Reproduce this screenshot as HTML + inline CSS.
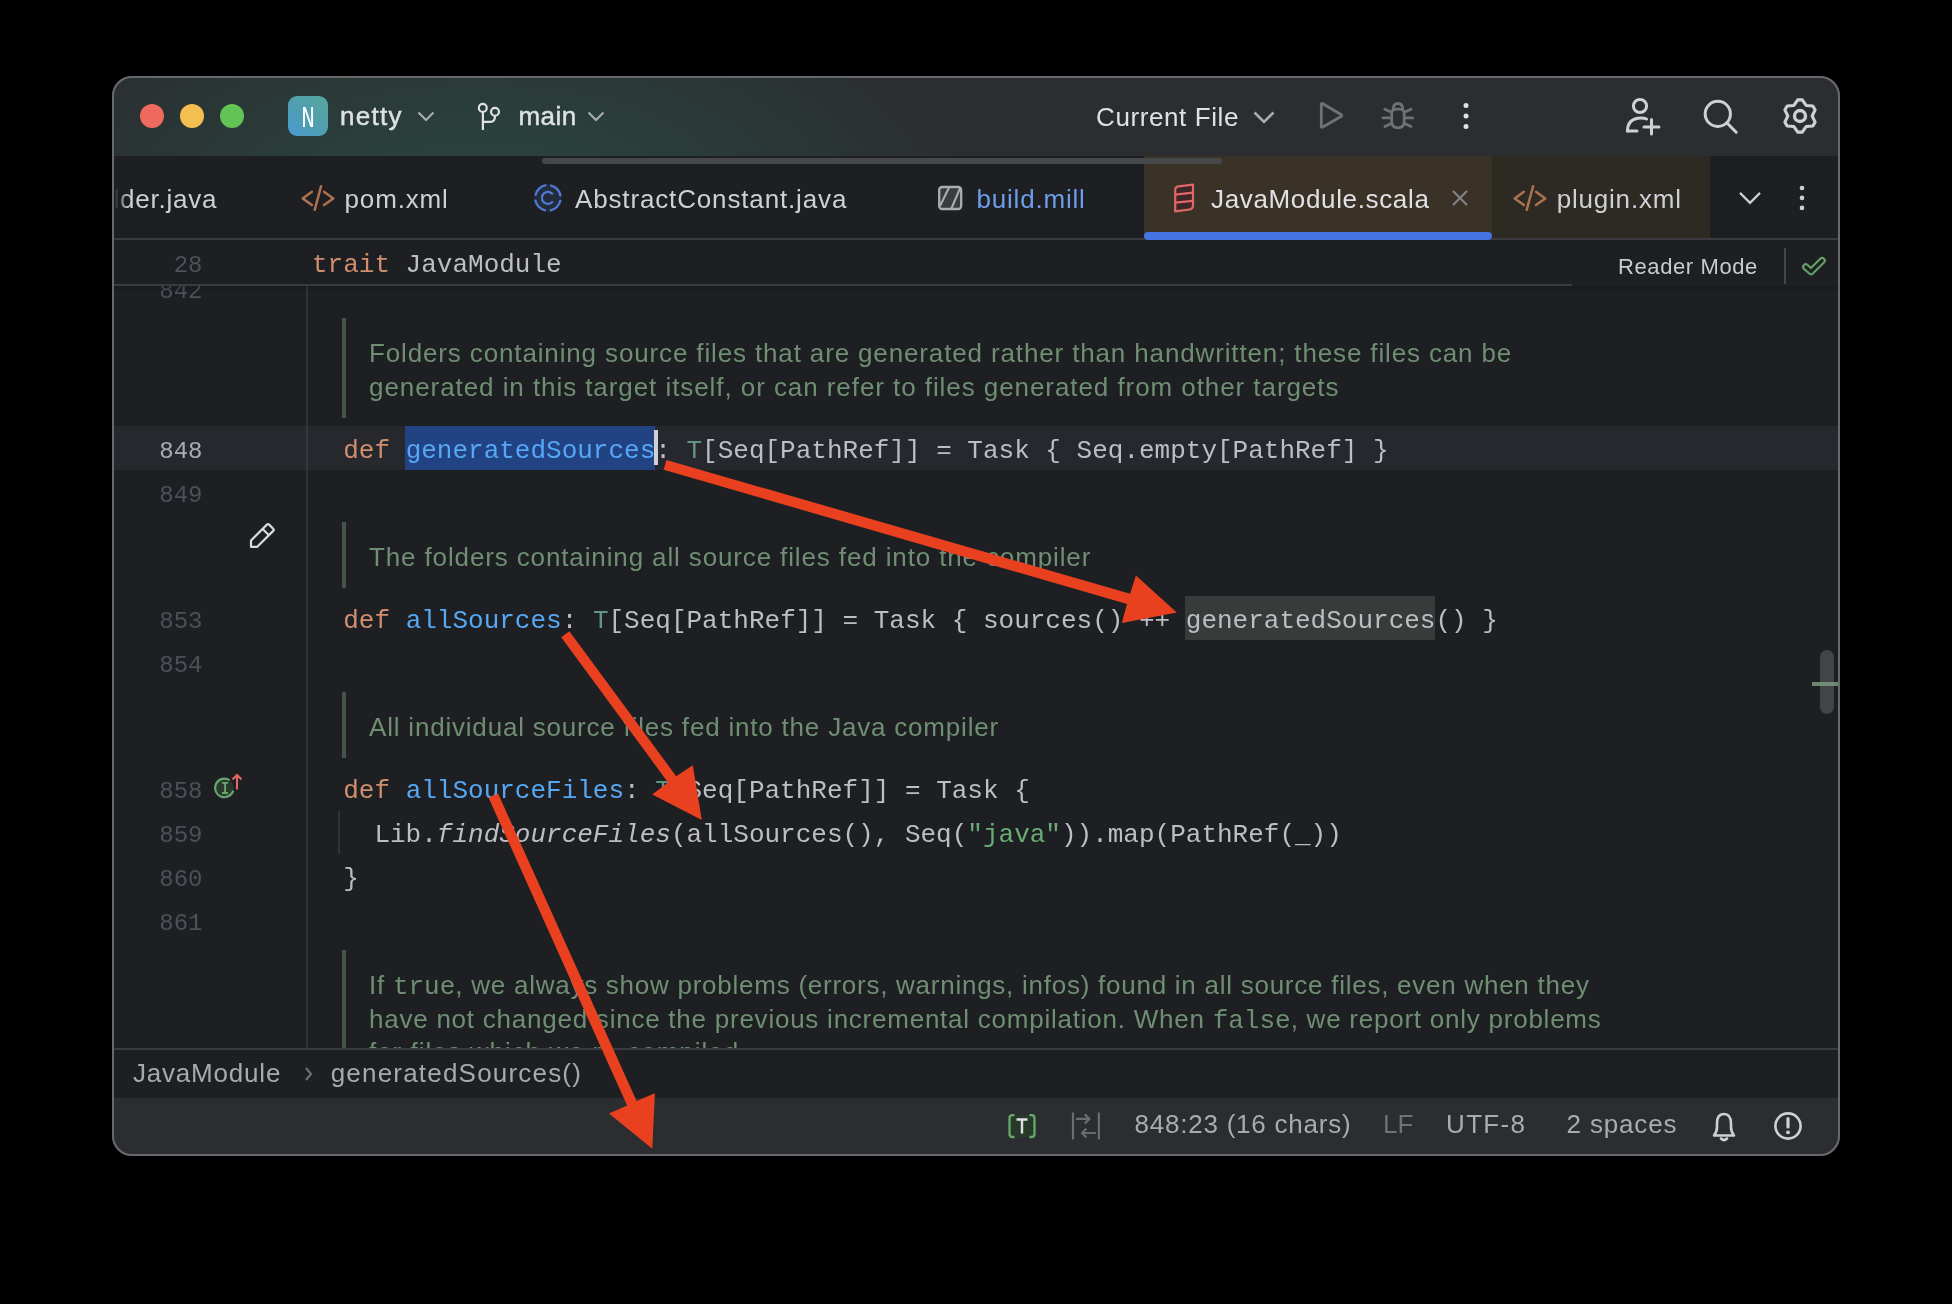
<!DOCTYPE html>
<html><head><meta charset="utf-8">
<style>
html,body{margin:0;padding:0}
body{width:1952px;height:1304px;background:#000;position:relative;overflow:hidden;font-family:"Liberation Sans",sans-serif}
.a{position:absolute}
#win{will-change:transform;position:absolute;left:0;top:0;width:1952px;height:1304px;clip-path:inset(76px 112px 148px 112px round 20px);background:#1e1f22}
.s{position:absolute;font-family:"Liberation Sans",sans-serif;white-space:pre;font-size:26px;line-height:34px;letter-spacing:0.8px}
.m{position:absolute;font-family:"Liberation Mono",monospace;white-space:pre;font-size:26px;line-height:44px;color:#bcbec4}
.ln{position:absolute;left:120px;width:82.5px;text-align:right;font-family:"Liberation Mono",monospace;font-size:24px;line-height:44px;color:#4b5059}
.kw{color:#cf8e6d}.fn{color:#56a8f5}.ty{color:#5f9486}.str{color:#6aab73}
.doc{position:absolute;left:369px;font-family:"Liberation Sans",sans-serif;white-space:pre;font-size:26px;line-height:34px;letter-spacing:0.85px;color:#6f8e73}
.dbar{position:absolute;left:342px;width:4px;background:#44554a}
.cm{font-family:"Liberation Mono",monospace;letter-spacing:0}
</style></head><body>
<div id="win">
  <!-- title bar -->
  <div class="a" style="left:112px;top:76px;width:1728px;height:80px;background:radial-gradient(ellipse 520px 250px at 370px 130px,#29463f 0%,#2a3c39 45%,#2b3032 85%,#2b2d30 100%)"></div>
  <div class="a" style="left:140px;top:104px;width:24px;height:24px;border-radius:50%;background:#ee6a5f"></div>
  <div class="a" style="left:180px;top:104px;width:24px;height:24px;border-radius:50%;background:#f5bf4f"></div>
  <div class="a" style="left:220px;top:104px;width:24px;height:24px;border-radius:50%;background:#61c454"></div>
  <div class="a" style="left:288px;top:96px;width:40px;height:40px;border-radius:9px;background:linear-gradient(45deg,#4b9bd1 0%,#4f9fb0 50%,#54a89b 100%)"></div>
  <div class="a" style="left:288px;top:99.5px;width:40px;height:40px;font-family:'Liberation Mono';font-size:29px;line-height:40px;text-align:center;color:#fff;transform:scaleX(0.78)">N</div>
  <div class="s" style="left:340px;top:99px;color:#dfe1e5;letter-spacing:1.3px;-webkit-text-stroke:0.45px #dfe1e5">netty</div>
  <svg class="a" style="left:412px;top:104px" width="28" height="24" viewBox="0 0 28 24"><path d="M6.5 8.5 L14 16 L21.5 8.5" fill="none" stroke="#a8abb0" stroke-width="2.2"/></svg>
  <svg class="a" style="left:470px;top:100px" width="36" height="34" viewBox="0 0 36 34"><circle cx="12.8" cy="7.9" r="3.95" fill="none" stroke="#dfe1e5" stroke-width="2.2"/><circle cx="25" cy="11.8" r="3.95" fill="none" stroke="#dfe1e5" stroke-width="2.2"/><path d="M12.9 11.9 V30 M12.9 21.9 H20.5 Q25 21.9 25 15.8" fill="none" stroke="#dfe1e5" stroke-width="2.2"/></svg>
  <div class="s" style="left:518.5px;top:99px;color:#dfe1e5;letter-spacing:0.45px;-webkit-text-stroke:0.45px #dfe1e5">main</div>
  <svg class="a" style="left:582px;top:104px" width="28" height="24" viewBox="0 0 28 24"><path d="M6.5 8.5 L14 16 L21.5 8.5" fill="none" stroke="#a8abb0" stroke-width="2.2"/></svg>

  <div class="s" style="left:1096px;top:100px;color:#dfe1e5;letter-spacing:0.6px">Current File</div>
  <svg class="a" style="left:1250px;top:104px" width="28" height="24" viewBox="0 0 28 24"><path d="M4.5 8.5 L14 18 L23.5 8.5" fill="none" stroke="#a8abb0" stroke-width="2.6"/></svg>
  <svg class="a" style="left:1314px;top:98px" width="36" height="36" viewBox="0 0 36 36"><path d="M7.3 6.5 Q7.3 4.9 8.8 5.7 L27 16.5 Q28.4 17.5 27 18.5 L8.8 29 Q7.3 29.8 7.3 28.1 Z" fill="none" stroke="#6f7175" stroke-width="2.8" stroke-linejoin="round"/></svg>
  <svg class="a" style="left:1380px;top:98px" width="36" height="36" viewBox="0 0 36 36"><path d="M13.2 11.2 Q13.2 5.5 17.95 5.5 Q22.7 5.5 22.7 11.2" fill="none" stroke="#6f7175" stroke-width="2.8"/><path d="M11.7 16 Q11.7 11.2 16.5 11.2 H19.4 Q24.2 11.2 24.2 16 V23.5 Q24.2 29.8 17.95 29.8 Q11.7 29.8 11.7 23.5 Z" fill="none" stroke="#6f7175" stroke-width="2.8"/><path d="M4.9 11.2 L10 13.6 M3.2 19.9 H9.6 M4.9 28.4 L10 25.9 M31 11.2 L25.9 13.6 M32.7 19.9 H26.3 M31 28.4 L25.9 25.9" fill="none" stroke="#6f7175" stroke-width="2.8" stroke-linecap="round"/></svg>
  <svg class="a" style="left:1456px;top:96px" width="20" height="40" viewBox="0 0 20 40"><circle cx="10" cy="9.4" r="2.5" fill="#dfe1e5"/><circle cx="10" cy="19.9" r="2.5" fill="#dfe1e5"/><circle cx="10" cy="30.4" r="2.5" fill="#dfe1e5"/></svg>

  <svg class="a" style="left:1620px;top:94px" width="46" height="46" viewBox="0 0 46 46"><circle cx="20" cy="12" r="6.6" fill="none" stroke="#ced0d6" stroke-width="3"/><path d="M7.5 37 Q7.5 24 21 24 Q24.5 24 26.5 25" fill="none" stroke="#ced0d6" stroke-width="3" stroke-linecap="round"/><path d="M7.5 37 H17" fill="none" stroke="#ced0d6" stroke-width="3" stroke-linecap="round"/><path d="M31.5 25.5 V40 M24 33 H39" fill="none" stroke="#ced0d6" stroke-width="3" stroke-linecap="round"/></svg>
  <svg class="a" style="left:1696px;top:92px" width="46" height="46" viewBox="0 0 46 46"><circle cx="21.8" cy="21.9" r="12.6" fill="none" stroke="#ced0d6" stroke-width="3"/><path d="M31 31 L40.2 40.2" fill="none" stroke="#ced0d6" stroke-width="3" stroke-linecap="round"/></svg>
  <svg class="a" style="left:1778px;top:94px" width="44" height="44" viewBox="0 0 44 44"><path d="M34.20 22.00 L37.11 28.11 L34.84 32.04 L28.10 32.57 L24.27 38.14 L19.73 38.14 L15.90 32.57 L9.16 32.04 L6.89 28.11 L9.80 22.00 L6.89 15.89 L9.16 11.96 L15.90 11.43 L19.73 5.86 L24.27 5.86 L28.10 11.43 L34.84 11.96 L37.11 15.89 Z" fill="none" stroke="#ced0d6" stroke-width="3.1" stroke-linejoin="round"/><circle cx="22" cy="22" r="5.5" fill="none" stroke="#ced0d6" stroke-width="3.4"/></svg>

  <!-- tab bar -->
  <div class="a" style="left:112px;top:156px;width:1728px;height:84px;background:#1e1f22"></div>
  <div class="a" style="left:112px;top:238px;width:1728px;height:2px;background:#393b40"></div>
  <div class="a" style="left:1144px;top:156px;width:348px;height:84px;background:#3b3227"></div>
  <div class="a" style="left:1492px;top:156px;width:218px;height:82px;background:#2d2923"></div>
  <div class="a" style="left:1144px;top:232px;width:348px;height:8px;border-radius:4px 4px 4px 4px;background:#4673e3"></div>
  <div class="a" style="left:542px;top:158px;width:680px;height:6px;border-radius:3px;background:#47484a"></div>

  <div class="s" style="left:113.5px;top:182px;color:#ced0d6;letter-spacing:0.75px">lder.java</div>
  <div class="a" style="left:112px;top:170px;width:16px;height:60px;background:linear-gradient(90deg,#1e1f22 0%,#1e1f22 15%,rgba(30,31,34,0) 100%)"></div>
  <svg class="a" style="left:298px;top:182px" width="40" height="32" viewBox="0 0 40 32"><path d="M13.9 9.7 L4.7 16.4 L13.9 23.1 M26 9.7 L35.3 16.4 L26 23.1 M23.1 4.2 L16.7 27.8" fill="none" stroke="#ad724e" stroke-width="2.5" stroke-linecap="round" stroke-linejoin="round"/></svg>
  <div class="s" style="left:344.5px;top:182px;color:#ced0d6;letter-spacing:0.86px">pom.xml</div>
  <svg class="a" style="left:530px;top:180px" width="36" height="36" viewBox="0 0 36 36"><circle cx="17.9" cy="17.9" r="14" fill="#232b3d"/><circle cx="17.9" cy="17.9" r="12.8" fill="none" stroke="#4f7ad4" stroke-width="2.3" stroke-dasharray="15.9 4.2" stroke-dashoffset="18"/><path d="M22.81 14.46 A6 6 0 1 0 22.81 21.34" fill="none" stroke="#4f7ad4" stroke-width="2.2"/></svg>
  <div class="s" style="left:575px;top:182px;color:#ced0d6;letter-spacing:0.85px">AbstractConstant.java</div>
  <svg class="a" style="left:934px;top:182px" width="32" height="32" viewBox="0 0 32 32"><rect x="5.2" y="5" width="22" height="22" rx="3" fill="#3a3b3f" stroke="#abadb2" stroke-width="2.3"/><path d="M6.1 23.8 L15.2 5.2 M17.2 27 L26 6.4" fill="none" stroke="#abadb2" stroke-width="2.1"/></svg>
  <div class="s" style="left:976.5px;top:182px;color:#6e9de8;letter-spacing:0.8px">build.mill</div>
  <svg class="a" style="left:1170px;top:182px" width="28" height="32" viewBox="0 0 28 32"><path d="M5.2 8 Q5.2 4.8 8.4 4.4 L23 2.7 V23.5 Q23 27 19.5 27.5 L5.2 29.3 Z" fill="#3e2526" stroke="#de6866" stroke-width="2.2" stroke-linejoin="round"/><path d="M5.2 12.7 L23 10.7 M5.2 20.7 L23 18.8" fill="none" stroke="#de6866" stroke-width="2.2"/></svg>
  <div class="s" style="left:1211px;top:182px;color:#dfe1e5;letter-spacing:0.65px">JavaModule.scala</div>
  <svg class="a" style="left:1450px;top:188px" width="20" height="20" viewBox="0 0 20 20"><path d="M3 3 L17 17 M17 3 L3 17" fill="none" stroke="#7f8289" stroke-width="2.2"/></svg>
  <svg class="a" style="left:1510px;top:182px" width="40" height="32" viewBox="0 0 40 32"><path d="M13.9 9.7 L4.7 16.4 L13.9 23.1 M26 9.7 L35.3 16.4 L26 23.1 M23.1 4.2 L16.7 27.8" fill="none" stroke="#ad724e" stroke-width="2.5" stroke-linecap="round" stroke-linejoin="round"/></svg>
  <div class="s" style="left:1556.7px;top:182px;color:#ced0d6;letter-spacing:0.8px">plugin.xml</div>
  <svg class="a" style="left:1736px;top:186px" width="28" height="24" viewBox="0 0 28 24"><path d="M4 6.9 L14 16.9 L24 6.9" fill="none" stroke="#ced0d6" stroke-width="2.2"/></svg>
  <svg class="a" style="left:1792px;top:180px" width="20" height="36" viewBox="0 0 20 36"><circle cx="10" cy="8" r="2.3" fill="#ced0d6"/><circle cx="10" cy="17.9" r="2.3" fill="#ced0d6"/><circle cx="10" cy="27.9" r="2.3" fill="#ced0d6"/></svg>

  <!-- editor -->
  <div class="a" style="left:306px;top:286px;width:2px;height:762px;background:#303236"></div>
  <div class="a" style="left:114px;top:426px;width:1724px;height:44px;background:#26282e"></div>
  <div class="a" style="left:306px;top:426px;width:2px;height:44px;background:#35373c"></div>

  <div class="ln" style="top:269.6px">842</div>
  <div class="ln" style="top:429.6px;color:#a9acb2">848</div>
  <div class="ln" style="top:473.6px">849</div>
  <div class="ln" style="top:599.6px">853</div>
  <div class="ln" style="top:643.6px">854</div>
  <div class="ln" style="top:769.6px">858</div>
  <div class="ln" style="top:813.6px">859</div>
  <div class="ln" style="top:857.6px">860</div>
  <div class="ln" style="top:901.6px">861</div>

  <!-- doc block 1 -->
  <div class="dbar" style="top:318px;height:100px"></div>
  <div class="doc" style="top:336px;letter-spacing:0.86px">Folders containing source files that are generated rather than handwritten; these files can be</div>
  <div class="doc" style="top:370px;letter-spacing:0.93px">generated in this target itself, or can refer to files generated from other targets</div>

  <!-- 848 -->
  <div class="a" style="left:405px;top:426px;width:250px;height:44px;background:#214283"></div>
  <div class="a" style="left:654px;top:430px;width:4px;height:35px;background:#ced0d6"></div>
  <div class="m" style="left:312px;top:429px">  <span class="kw">def</span> <span class="fn">generatedSources</span>: <span class="ty">T</span>[Seq[PathRef]] = Task { Seq.empty[PathRef] }</div>

  <!-- pencil -->
  <svg class="a" style="left:246px;top:519px" width="34" height="34" viewBox="0 0 34 34"><path d="M5 27.8 V21.5 L20.9 5.6 Q22 4.5 23.1 5.6 L27.2 9.7 Q28.3 10.8 27.2 11.9 L11.3 27.8 Z M16.9 10.2 L22.7 16" fill="none" stroke="#d8dadf" stroke-width="2.2" stroke-linejoin="round"/></svg>

  <!-- doc block 2 -->
  <div class="dbar" style="top:522px;height:66px"></div>
  <div class="doc" style="top:540px;letter-spacing:0.87px">The folders containing all source files fed into the compiler</div>

  <!-- 853 -->
  <div class="a" style="left:1185px;top:596px;width:250px;height:44px;background:#373b39"></div>
  <div class="m" style="left:312px;top:599px">  <span class="kw">def</span> <span class="fn">allSources</span>: <span class="ty">T</span>[Seq[PathRef]] = Task { sources() ++ generatedSources() }</div>

  <!-- doc block 3 -->
  <div class="dbar" style="top:692px;height:66px"></div>
  <div class="doc" style="top:710px;letter-spacing:0.8px">All individual source files fed into the Java compiler</div>

  <!-- 858 -->
  <svg class="a" style="left:210px;top:770px" width="36" height="32" viewBox="0 0 36 32"><circle cx="14.4" cy="17.9" r="9.3" fill="#283a29"/><path d="M23.29 20.62 A9.3 9.3 0 1 1 19.6 10.19" fill="none" stroke="#69a56d" stroke-width="2.1"/><path d="M12 12.9 H18 M15.1 12.9 V23 M12 23 H18" fill="none" stroke="#69a56d" stroke-width="1.9"/><path d="M27 19.6 V5.5 M22.5 9.4 L27 4.9 L31.5 9.4" fill="none" stroke="#dc6864" stroke-width="2.1"/></svg>
  <div class="m" style="left:312px;top:769px">  <span class="kw">def</span> <span class="fn">allSourceFiles</span>: <span class="ty">T</span>[Seq[PathRef]] = Task {</div>
  <div class="a" style="left:338px;top:811px;width:2px;height:43px;background:#313338"></div>
  <div class="m" style="left:312px;top:813px">    Lib.<i>findSourceFiles</i>(allSources(), Seq(<span class="str">"java"</span>)).map(PathRef(_))</div>
  <div class="m" style="left:312px;top:857px">  }</div>

  <!-- doc block 4 -->
  <div class="dbar" style="top:950px;height:120px"></div>
  <div class="doc" style="top:968px;letter-spacing:0.745px">If <span class="cm">true</span>, we always show problems (errors, warnings, infos) found in all source files, even when they</div>
  <div class="doc" style="top:1002px;letter-spacing:0.76px">have not changed since the previous incremental compilation. When <span class="cm">false</span>, we report only problems</div>
  <div class="doc" style="top:1034.5px;letter-spacing:0.97px">for files which we re-compiled.</div>

  <!-- scrollbar -->
  <div class="a" style="left:1820px;top:650px;width:14px;height:64px;border-radius:7px;background:#434446"></div>
  <div class="a" style="left:1812px;top:682px;width:26px;height:4px;background:rgba(125,160,133,0.8)"></div>

  <!-- sticky line -->
  <div class="a" style="left:112px;top:240px;width:1728px;height:44px;background:#1e1f22"></div>
  <div class="a" style="left:114px;top:284px;width:1458px;height:2px;background:#393b40"></div>
  <div class="a" style="left:114px;top:286px;width:1724px;height:7px;background:linear-gradient(180deg,rgba(0,0,0,0.16),rgba(0,0,0,0))"></div>
  <div class="ln" style="top:243.6px">28</div>
  <div class="m" style="left:312px;top:243px"><span class="kw">trait</span> JavaModule</div>
  <div class="a" style="left:1572px;top:240px;width:266px;height:46px;background:#1e1f22"></div>
  <div class="s" style="left:1618px;top:252.4px;font-size:22px;line-height:30px;letter-spacing:0.6px;color:#c9cbd0">Reader Mode</div>
  <div class="a" style="left:1784px;top:248px;width:2px;height:36px;background:#44464b"></div>
  <svg class="a" style="left:1798px;top:254px" width="32" height="26" viewBox="0 0 32 26"><path d="M7.8 12.9 L13 17.6 L24.1 6.6" fill="none" stroke="#62a066" stroke-width="7.4" stroke-linejoin="round" stroke-linecap="round"/><path d="M7.8 12.9 L13 17.6 L24.1 6.6" fill="none" stroke="#1e1f22" stroke-width="3.2" stroke-linejoin="round" stroke-linecap="round"/></svg>

  <!-- breadcrumbs -->
  <div class="a" style="left:112px;top:1048px;width:1728px;height:50px;background:#1e1f22"></div>
  <div class="a" style="left:112px;top:1048px;width:1728px;height:2px;background:#393b40"></div>
  <div class="s" style="left:133px;top:1055.7px;color:#a6a9ae;letter-spacing:0.8px">JavaModule</div>
  <svg class="a" style="left:300px;top:1064px" width="16" height="20" viewBox="0 0 16 20"><path d="M6 4 L11 10 L6 16" fill="none" stroke="#6f7276" stroke-width="2"/></svg>
  <div class="s" style="left:330.7px;top:1055.7px;color:#a6a9ae;letter-spacing:1.2px">generatedSources()</div>

  <!-- status bar -->
  <div class="a" style="left:112px;top:1098px;width:1728px;height:58px;background:#2b2d30"></div>
  <svg class="a" style="left:1004px;top:1110px" width="36" height="32" viewBox="0 0 36 32"><rect x="6" y="5" width="24" height="22" fill="#273a29"/><path d="M10.5 5.2 H8.5 Q5.5 5.2 5.5 8.2 V24 Q5.5 27 8.5 27 H10.5 M25.5 5.2 H27.5 Q30.5 5.2 30.5 8.2 V24 Q30.5 27 27.5 27 H25.5" fill="none" stroke="#66a96b" stroke-width="2.3"/><path d="M12.5 9.5 H23.5 M18 9.5 V23.5" fill="none" stroke="#dfe1e5" stroke-width="2.4"/></svg>
  <svg class="a" style="left:1068px;top:1108px" width="36" height="36" viewBox="0 0 36 36"><path d="M5 4.5 V31.5 M30.9 4.5 V31.5 M8 10.9 H21.6 M16.8 6.3 L21.4 10.9 L16.8 15.5 M27.8 25 H14.2 M18.4 20.6 L14.2 25 L18.4 29.4" fill="none" stroke="#6b6c70" stroke-width="2.2"/></svg>
  <div class="s" style="left:1134.5px;top:1107.3px;color:#a8abb0;letter-spacing:0.77px">848:23 (16 chars)</div>
  <div class="s" style="left:1383px;top:1107.3px;color:#6f7277;letter-spacing:0px">LF</div>
  <div class="s" style="left:1446px;top:1107.3px;color:#a8abb0;letter-spacing:1.35px">UTF-8</div>
  <div class="s" style="left:1566.5px;top:1107.3px;color:#a8abb0;letter-spacing:0.85px">2 spaces</div>
  <svg class="a" style="left:1706px;top:1108px" width="36" height="36" viewBox="0 0 36 36"><path d="M8 27.5 Q11 24 11 19 V15.5 Q11 6 18 6 Q25 6 25 15.5 V19 Q25 24 28 27.5 Z" fill="none" stroke="#ced0d6" stroke-width="2.6" stroke-linejoin="round"/><path d="M15 30.5 Q18 33.5 21 30.5" fill="none" stroke="#ced0d6" stroke-width="2.6" stroke-linecap="round"/></svg>
  <svg class="a" style="left:1770px;top:1108px" width="36" height="36" viewBox="0 0 36 36"><circle cx="18" cy="18" r="12.6" fill="none" stroke="#ced0d6" stroke-width="2.6"/><path d="M18 10.5 V19" fill="none" stroke="#ced0d6" stroke-width="3.2" stroke-linecap="round"/><circle cx="18" cy="24.3" r="1.9" fill="#ced0d6"/></svg>
</div>
<!-- window border -->
<div class="a" style="left:112px;top:76px;width:1728px;height:1080px;box-sizing:border-box;border:2px solid #68696c;border-radius:20px"></div>

<!-- arrows -->
<svg class="a" style="left:0;top:0" width="1952" height="1304" viewBox="0 0 1952 1304">
  <g fill="#e9411f">
    <polygon points="666.4,460 1130.1,593.7 1135.9,575.4 1176.8,612.6 1121.8,623 1127,604 663.7,469.8"/>
    <polygon points="569.4,631.3 676.2,776.2 692.8,765.2 701.8,820 652.3,794.5 668,782.4 561.2,637.2"/>
    <polygon points="498.1,793.6 636.6,1100.9 654.9,1093.2 652.3,1148.7 609,1113.4 627.1,1105.5 488.6,797.7"/>
  </g>
</svg>
</body></html>
